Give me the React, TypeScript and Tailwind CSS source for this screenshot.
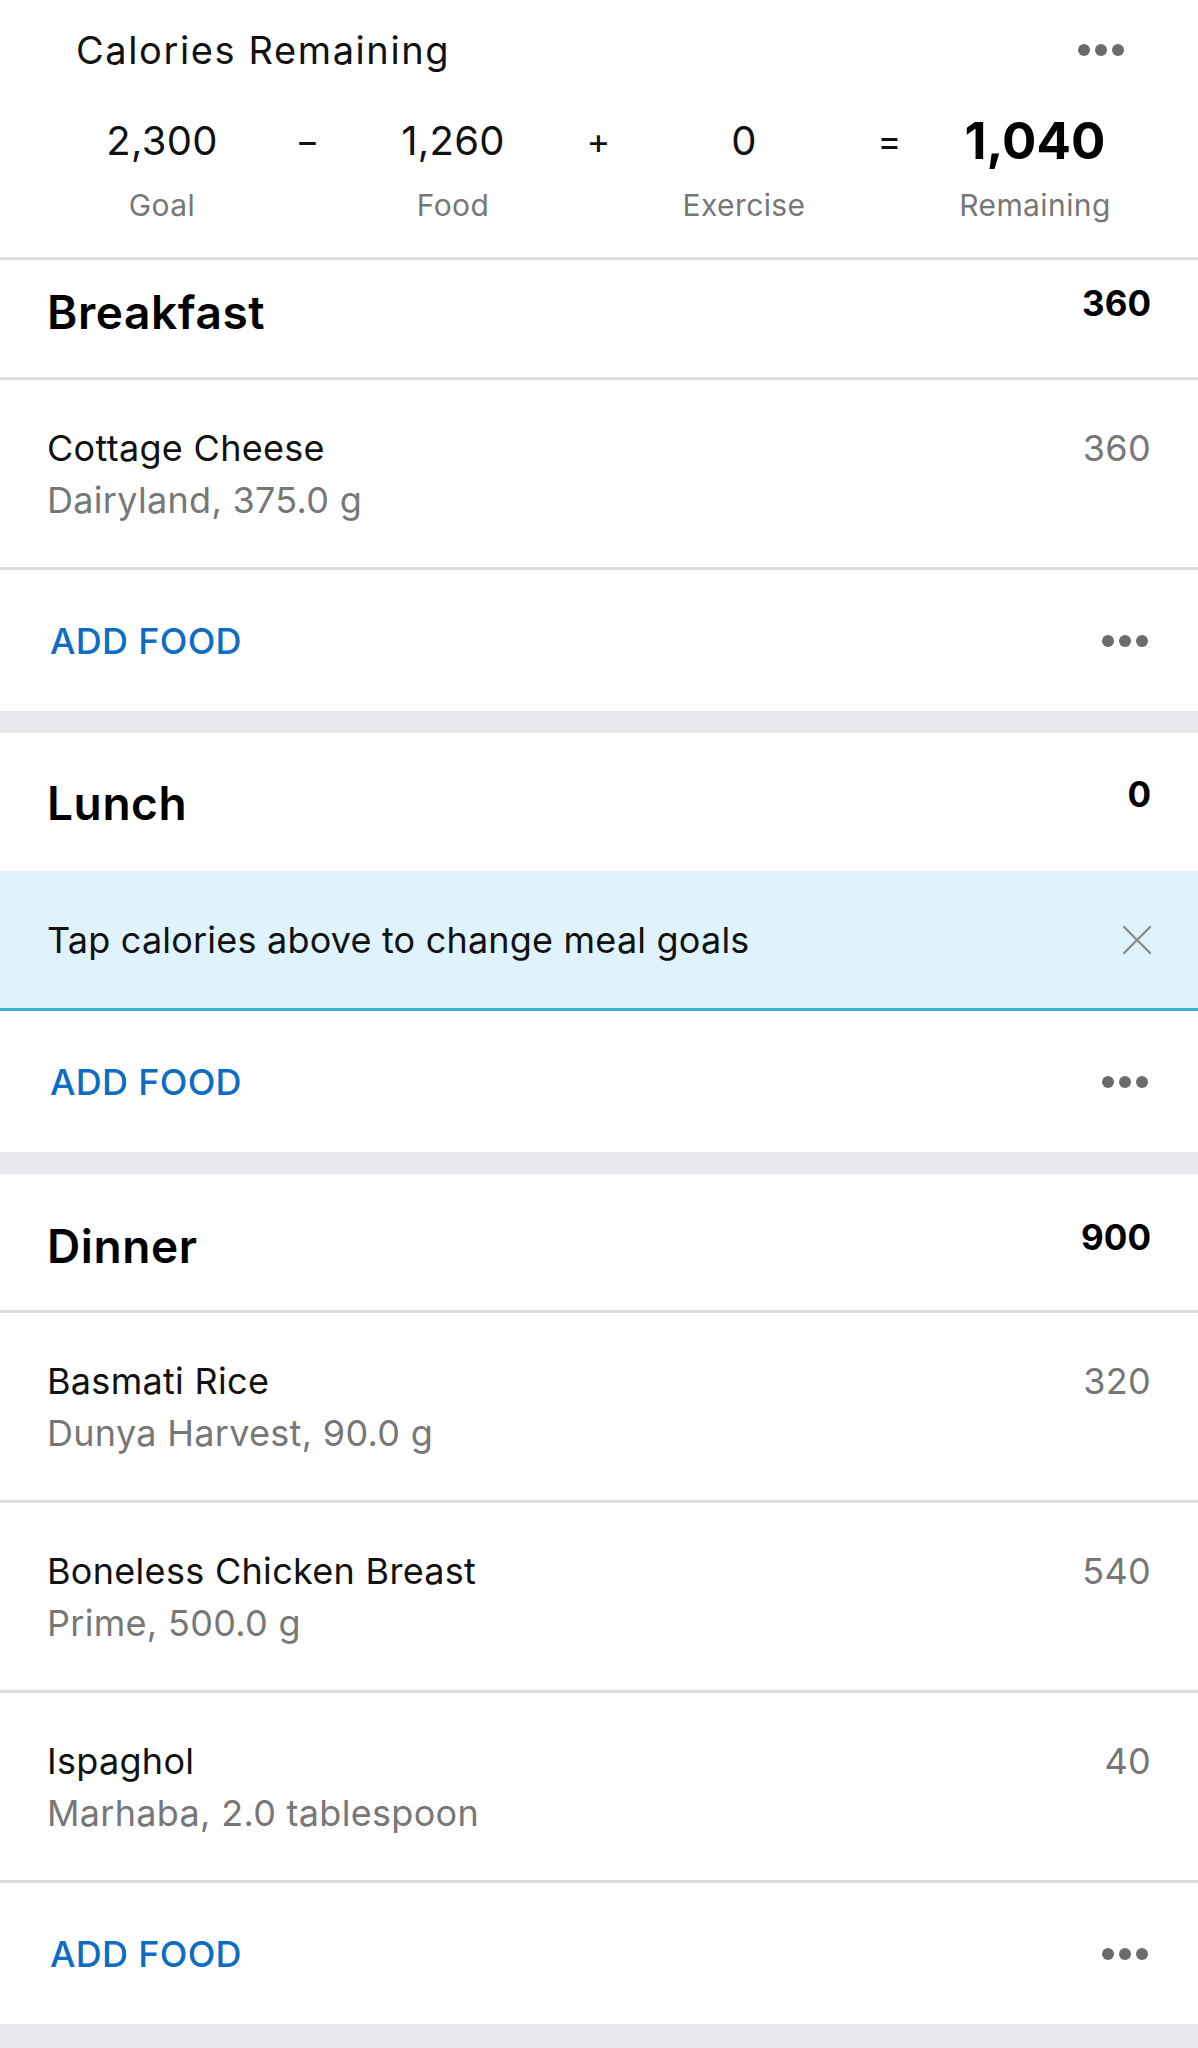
import React from "react";

type Food = { name: string; detail: string; cal: number };

const meals = [
  {
    title: "Breakfast",
    total: "360",
    head: "h-[117px] pt-[26px]",
    foods: [{ name: "Cottage Cheese", detail: "Dairyland, 375.0 g", cal: 360 }],
    tip: false,
  },
  {
    title: "Lunch",
    total: "0",
    head: "h-[138px] pt-[44px]",
    foods: [] as Food[],
    tip: true,
  },
  {
    title: "Dinner",
    total: "900",
    head: "h-[136px] pt-[46px]",
    foods: [
      { name: "Basmati Rice", detail: "Dunya Harvest, 90.0 g", cal: 320 },
      { name: "Boneless Chicken Breast", detail: "Prime, 500.0 g", cal: 540 },
      { name: "Ispaghol", detail: "Marhaba, 2.0 tablespoon", cal: 40 },
    ],
    tip: false,
  },
];

const Dots = () => (
  <div className="flex gap-[5px]">
    <span className="w-[12px] h-[12px] rounded-full bg-[#6b6b6b]" />
    <span className="w-[12px] h-[12px] rounded-full bg-[#6b6b6b]" />
    <span className="w-[12px] h-[12px] rounded-full bg-[#6b6b6b]" />
  </div>
);

const Stat = ({ value, label, bold }: { value: string; label: string; bold?: boolean }) => (
  <div className="w-[180px] flex flex-col items-center">
    <div
      className={
        bold
          ? "text-[51px] leading-[48px] font-bold text-black"
          : "text-[40px] leading-[48px] tracking-[0.3px] text-[#111]"
      }
    >
      {value}
    </div>
    <div className="mt-[22px] text-[30px] leading-[36px] tracking-[0.4px] text-[#777]">{label}</div>
  </div>
);

const Op = ({ sign }: { sign: string }) => (
  <div className="w-[111px] h-[48px] flex items-center justify-center text-[36px] text-[#111]">
    {sign}
  </div>
);

const Divider = () => <div className="h-[3px] bg-[#dcdcdc]" />;

const FoodRow = ({ food }: { food: Food }) => (
  <div className="h-[187px] px-[47px] pt-[46px] flex justify-between items-start">
    <div className="flex flex-col gap-[8px]">
      <div className="text-[36px] leading-[44px] tracking-[0.3px] text-[#111]">{food.name}</div>
      <div className="text-[36px] leading-[44px] tracking-[0.3px] text-[#777]">{food.detail}</div>
    </div>
    <div className="text-[36px] leading-[44px] tracking-[0.3px] text-[#777]">{food.cal}</div>
  </div>
);

const AddFood = () => (
  <div className="h-[141px] px-[50px] flex items-center justify-between">
    <span className="text-[36px] font-medium tracking-[0.3px] text-[#0d6cc4]">ADD FOOD</span>
    <Dots />
  </div>
);

export default function App() {
  return (
    <div className="w-[1198px] min-h-[2048px] bg-[#e9e9ed] font-['Inter','Noto_Sans',sans-serif]">
      <div className="bg-white">
        <div className="h-[257px] pt-[28px]">
          <div className="px-[76px] flex items-center justify-between">
            <span className="text-[38px] leading-[44px] tracking-[1.6px] text-[#111]">Calories Remaining</span>
            <div className="mr-[-2px]">
              <Dots />
            </div>
          </div>
          <div className="mt-[45px] px-[72px] flex">
            <Stat value="2,300" label="Goal" />
            <Op sign="−" />
            <Stat value="1,260" label="Food" />
            <Op sign="+" />
            <Stat value="0" label="Exercise" />
            <Op sign="=" />
            <Stat value="1,040" label="Remaining" bold />
          </div>
        </div>
        <Divider />
      </div>

      {meals.map((meal) => (
        <div key={meal.title} className="bg-white mb-[22px]">
          <div className={`${meal.head} px-[47px] flex justify-between items-start`}>
            <span className="text-[46px] leading-[52px] font-semibold tracking-[0.6px] text-black">{meal.title}</span>
            <span className="mt-[-3px] text-[35px] leading-[40px] font-bold text-black">{meal.total}</span>
          </div>
          {meal.tip ? (
            <div className="h-[140px] bg-[#def3fc] border-b-[3px] border-[#3fb2da] px-[47px] flex items-center justify-between">
              <span className="text-[36px] tracking-[0.2px] text-[#111]">Tap calories above to change meal goals</span>
              <svg width="30" height="30" viewBox="0 0 30 30" className="mr-[-1px]">
                <path d="M2 2 L28 28 M28 2 L2 28" stroke="#8c8c8c" strokeWidth="2.4" strokeLinecap="round" />
              </svg>
            </div>
          ) : (
            <>
              <Divider />
              {meal.foods.map((f) => (
                <React.Fragment key={f.name}>
                  <FoodRow food={f} />
                  <Divider />
                </React.Fragment>
              ))}
            </>
          )}
          <AddFood />
        </div>
      ))}
    </div>
  );
}
